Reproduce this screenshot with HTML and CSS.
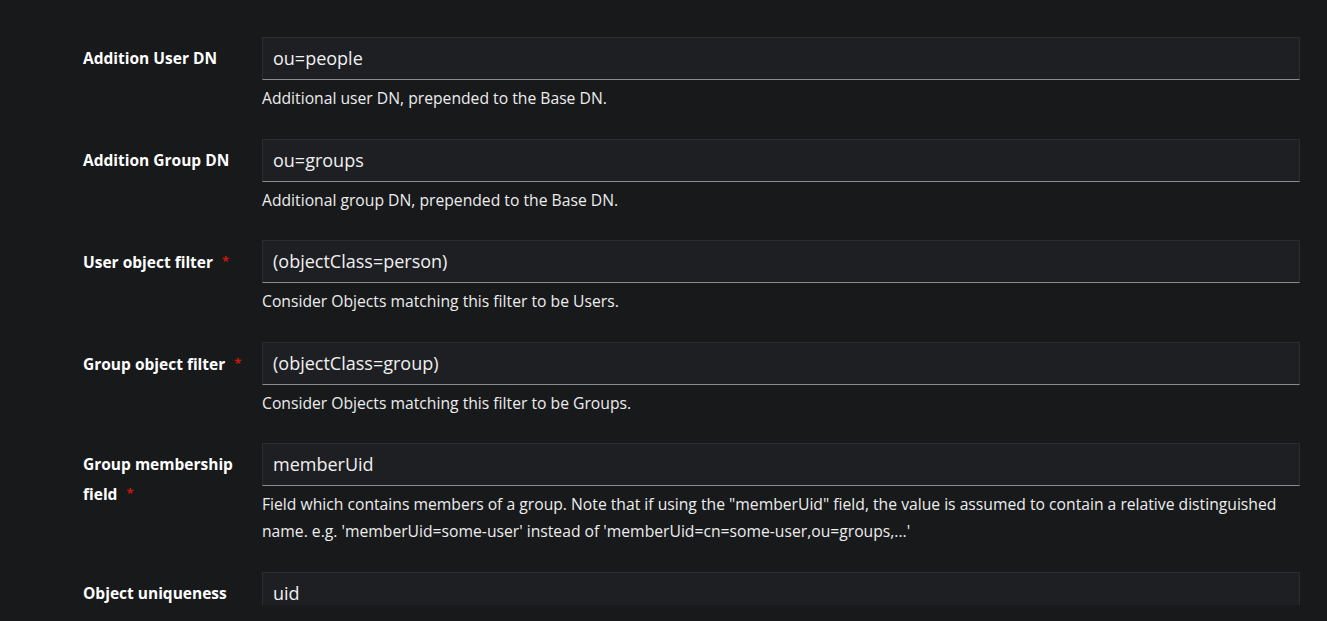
FILE: index.html
```html
<!DOCTYPE html>
<html>
<head>
<meta charset="utf-8">
<link rel="stylesheet" href="styles.css">
</head>
<body>
<div class="viewport">
  <form class="form">
    <div class="row">
      <label class="label">Addition User DN</label>
      <div class="control">
        <div class="input">ou=people</div>
        <p class="helper">Additional user DN, prepended to the Base DN.</p>
      </div>
    </div>
    <div class="row">
      <label class="label">Addition Group DN</label>
      <div class="control">
        <div class="input">ou=groups</div>
        <p class="helper">Additional group DN, prepended to the Base DN.</p>
      </div>
    </div>
    <div class="row">
      <label class="label">User object filter<span class="req">*</span></label>
      <div class="control">
        <div class="input">(objectClass=person)</div>
        <p class="helper">Consider Objects matching this filter to be Users.</p>
      </div>
    </div>
    <div class="row">
      <label class="label">Group object filter<span class="req">*</span></label>
      <div class="control">
        <div class="input">(objectClass=group)</div>
        <p class="helper">Consider Objects matching this filter to be Groups.</p>
      </div>
    </div>
    <div class="row">
      <label class="label">Group membership field<span class="req">*</span></label>
      <div class="control">
        <div class="input">memberUid</div>
        <p class="helper">Field which contains members of a group. Note that if using the "memberUid" field, the value is assumed to contain a relative distinguished name. e.g. 'memberUid=some-user' instead of 'memberUid=cn=some-user,ou=groups,...'</p>
      </div>
    </div>
    <div class="row">
      <label class="label">Object uniqueness</label>
      <div class="control">
        <div class="input">uid</div>
      </div>
    </div>
  </form>
</div>
</body>
</html>
```

FILE: styles.css
```css
html, body {
  margin: 0;
  padding: 0;
  background: #18191b;
}
body {
  font-family: "Open Sans", Lato, sans-serif;
  color: #e6e6e6;
}
.viewport {
  height: 605px;
  overflow: hidden;
}
.form {
  display: flex;
  flex-direction: column;
  gap: 26.6px;
  padding: 37px 27px 0 83px;
  margin: 0;
}
.row {
  display: grid;
  grid-template-columns: 179px 1fr;
}
.label {
  font-weight: 700;
  font-size: 15.5px;
  line-height: 29px;
  padding-top: 7px;
  padding-right: 12px;
  color: #ffffff;
}
.req {
  color: #c9190b;
  margin-left: 9px;
  font-size: 13px;
  font-weight: 700;
  vertical-align: 2px;
}
.input {
  height: 43px;
  box-sizing: border-box;
  background: #1e1f23;
  border: 1px solid #2c2d31;
  border-bottom: 1px solid #8a8d90;
  padding: 0 10px;
  font-size: 18px;
  line-height: 41px;
  color: #f0f0f0;
}
.helper {
  margin: 5px 0 0 0;
  font-size: 15.7px;
  line-height: 27px;
  color: #ededed;
}
```
